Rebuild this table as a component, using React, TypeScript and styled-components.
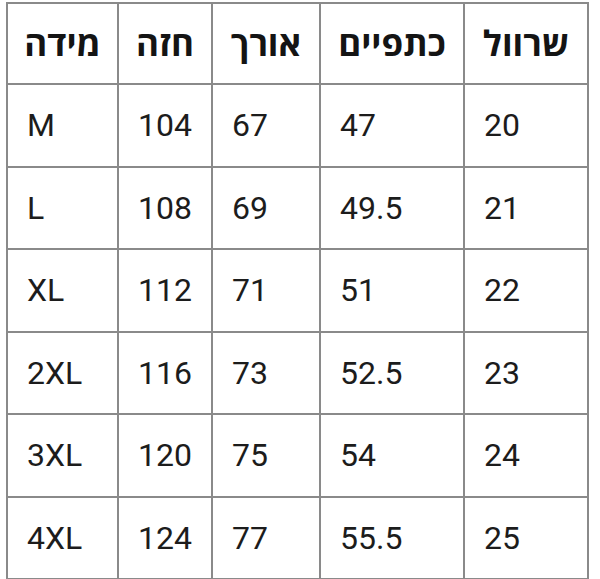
import styled, { createGlobalStyle } from "styled-components";

const GlobalStyle = createGlobalStyle`
  html, body {
    margin: 0;
    padding: 0;
    background: #fff;
  }
`;

const headers = ["מידה", "חזה", "אורך", "כתפיים", "שרוול"];
const widths = [111, 94, 108, 144, 124];

const rows = [
  ["M", "104", "67", "47", "20"],
  ["L", "108", "69", "49.5", "21"],
  ["XL", "112", "71", "51", "22"],
  ["2XL", "116", "73", "52.5", "23"],
  ["3XL", "120", "75", "54", "24"],
  ["4XL", "124", "77", "55.5", "25"],
];

const App = () => {
  return (
    <Page>
      <GlobalStyle />
      <Table>
        <colgroup>
          {widths.map((w, i) => (
            <Col key={i} $w={w} />
          ))}
        </colgroup>
        <thead>
          <HeadRow>
            {headers.map((h, i) => (
              <Th key={i} dir="rtl">
                {h}
              </Th>
            ))}
          </HeadRow>
        </thead>
        <tbody>
          {rows.map((r, i) => (
            <Row key={i}>
              {r.map((v, j) => (
                <Td key={j}>{v}</Td>
              ))}
            </Row>
          ))}
        </tbody>
      </Table>
    </Page>
  );
};

export default App;

const Page = styled.div`
  padding: 2px 0 0 6px;
`;

const Table = styled.table`
  border-collapse: collapse;
  table-layout: fixed;
  width: 581px;
`;

const Col = styled.col<{ $w: number }>`
  width: ${(p) => p.$w}px;
`;

const HeadRow = styled.tr`
  height: 81px;
`;

const Row = styled.tr`
  height: 82.5px;
`;

const Th = styled.th`
  border: 2px solid #8a8a8a;
  padding: 0 0 2px;
  font-family: "Open Sans", "DejaVu Sans", sans-serif;
  font-weight: 700;
  font-size: 35px;
  color: #141414;
  text-align: center;
  vertical-align: middle;
  white-space: nowrap;
`;

const Td = styled.td`
  border: 2px solid #8a8a8a;
  padding: 0 0 0 19px;
  font-family: Roboto, "Liberation Sans", sans-serif;
  font-size: 32px;
  color: #1c1c1c;
  text-align: left;
  vertical-align: middle;
`;
